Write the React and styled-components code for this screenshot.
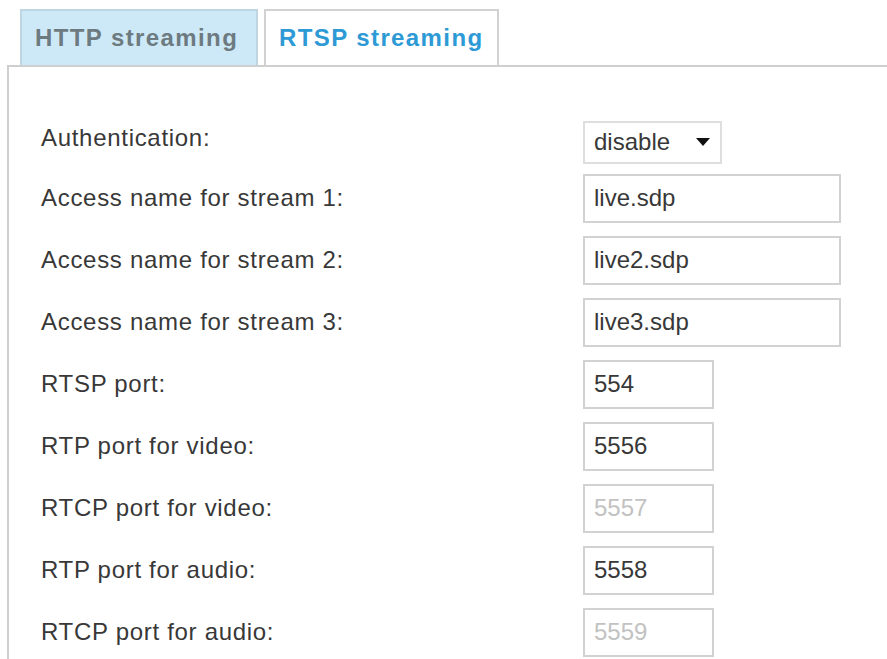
import React from 'react';
import styled, { createGlobalStyle } from 'styled-components';

const GlobalStyle = createGlobalStyle`
  html, body {
    margin: 0;
    padding: 0;
    background: #fff;
    overflow: hidden;
  }
  body {
    font-family: 'Liberation Sans', Arial, sans-serif;
  }
`;

const Page = styled.div`
  box-sizing: border-box;
  height: 100vh;
  overflow: hidden;
  display: flex;
  flex-direction: column;
  padding-top: 9px;
  padding-left: 7px;
`;

const TabStrip = styled.div`
  display: flex;
  gap: 6px;
  margin-left: 13px;
`;

const Tab = styled.div`
  box-sizing: border-box;
  width: ${({ w }) => w}px;
  height: 56px;
  display: flex;
  align-items: center;
  padding-left: 13px;
  font-size: 24px;
  font-weight: 700;
  letter-spacing: 1.4px;
  border: 2px solid ${({ active }) => (active ? '#d2d2d2' : '#bfd6e2')};
  border-bottom: none;
  background: ${({ active }) => (active ? '#ffffff' : '#cde9f8')};
  color: ${({ active }) => (active ? '#2d9ad6' : '#6d7b81')};
`;

const Panel = styled.div`
  flex: 1;
  border-top: 2px solid #cfcfcf;
  border-left: 2px solid #cfcfcf;
  padding-top: 50px;
  padding-left: 32px;
`;

const Form = styled.div`
  display: grid;
  grid-template-columns: 542px auto;
`;

const Row = styled.div`
  display: contents;
`;

const Label = styled.div`
  box-sizing: border-box;
  height: ${({ h }) => h}px;
  padding-bottom: ${({ lift }) => lift || 0}px;
  display: flex;
  align-items: center;
  font-size: 24px;
  letter-spacing: 0.7px;
  color: #383838;
`;

const Cell = styled.div`
  height: ${({ h }) => h}px;
  display: flex;
  align-items: center;
`;

const TextBox = styled.input`
  box-sizing: border-box;
  width: ${({ wide }) => (wide ? 258 : 131)}px;
  height: 49px;
  margin: 0;
  padding: 0 0 0 9px;
  border: 2px solid #d2d2d2;
  border-radius: 0;
  background: #fff;
  font-family: 'Liberation Sans', Arial, sans-serif;
  font-size: 24px;
  color: #383838;
  outline: none;

  &:disabled {
    color: #c2c2c2;
    background: #fff;
  }
`;

const SelectBox = styled.div`
  box-sizing: border-box;
  width: 139px;
  height: 43px;
  display: flex;
  align-items: center;
  justify-content: space-between;
  padding: 0 10px 0 9px;
  border: 2px solid #dedede;
  font-size: 24px;
  color: #383838;
`;

const Arrow = () => (
  <svg width="14" height="8" viewBox="0 0 14 8">
    <path d="M0 0 L14 0 L7 8 Z" fill="#111" />
  </svg>
);

const rows = [
  { label: 'Access name for stream 1:', value: 'live.sdp', wide: true },
  { label: 'Access name for stream 2:', value: 'live2.sdp', wide: true },
  { label: 'Access name for stream 3:', value: 'live3.sdp', wide: true },
  { label: 'RTSP port:', value: '554' },
  { label: 'RTP port for video:', value: '5556' },
  { label: 'RTCP port for video:', value: '5557', disabled: true },
  { label: 'RTP port for audio:', value: '5558' },
  { label: 'RTCP port for audio:', value: '5559', disabled: true },
];

export default function App() {
  return (
    <Page>
      <GlobalStyle />
      <TabStrip>
        <Tab w={238}>HTTP streaming</Tab>
        <Tab w={235} active>RTSP streaming</Tab>
      </TabStrip>
      <Panel>
        <Form>
          <Row>
            <Label h={50} lift={8}>Authentication:</Label>
            <Cell h={50}>
              <SelectBox>
                <span>disable</span>
                <Arrow />
              </SelectBox>
            </Cell>
          </Row>
          {rows.map((r) => (
            <Row key={r.label}>
              <Label h={62}>{r.label}</Label>
              <Cell h={62}>
                <TextBox
                  wide={r.wide}
                  value={r.value}
                  disabled={r.disabled}
                  readOnly
                />
              </Cell>
            </Row>
          ))}
        </Form>
      </Panel>
    </Page>
  );
}
